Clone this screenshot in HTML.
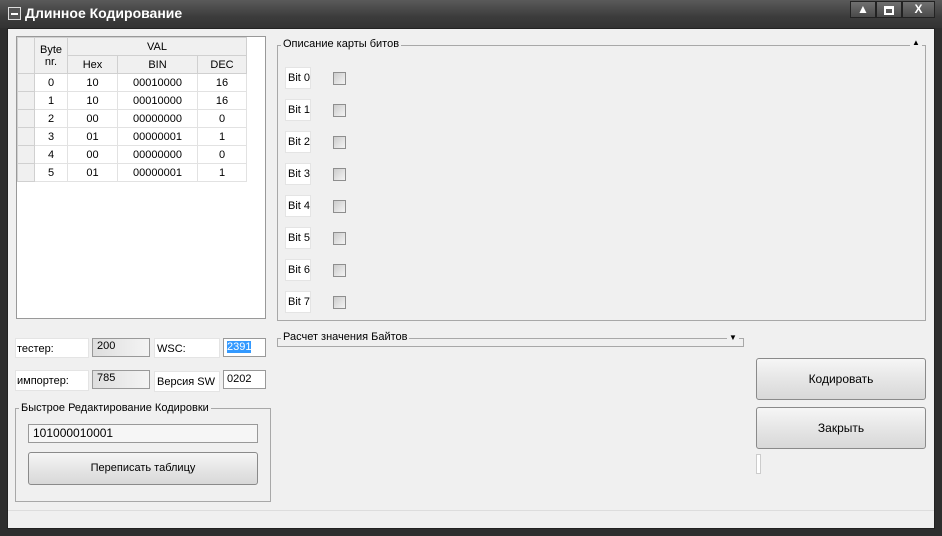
<!DOCTYPE html><html><head><meta charset="utf-8"><style>
*{box-sizing:border-box;margin:0;padding:0}
body{width:942px;height:536px;background:#2e2e2e;font-family:"Liberation Sans",sans-serif;font-size:11px;color:#000;position:relative;overflow:hidden}
.a{position:absolute;white-space:nowrap}
.title{left:0;top:0;width:942px;height:28px;background:linear-gradient(#5a5a5a,#3c3c3c 60%,#333);}
.client{left:7px;top:28px;width:928px;height:501px;background:#f0f0f0;border:1px solid #222}
table{border-collapse:collapse;position:absolute;left:17px;top:37px;background:#fff;font-size:11px}
td{border:1px solid #e2e2e2;text-align:center;height:18px;padding:0}
td.h{background:#f0f0f0;border-color:#d0d0d0}
.lbl{background:#fff;border:1px solid #e4e4e4;padding:3px 2px;}
.bl{background:#fff;border:1px solid #e4e4e4;width:26px;height:22px;line-height:20px;padding-left:2px}
.fld{background:linear-gradient(90deg,#dedede,#f4f4f4);border:1px solid #999;padding:1px 4px}
.cb{width:13px;height:13px;border:1px solid #8e8e8e;background:linear-gradient(135deg,#ccc,#f4f4f4)}
.btn{border:1px solid #8a8a8a;border-radius:3px;background:linear-gradient(#f6f6f6,#e6e6e6 50%,#d8d8d8);text-align:center;font-size:12px}
.grp{border:1px solid #a8a8a8}
.leg{background:#f0f0f0;padding:0 2px;font-size:11px}
.wb{top:1px;height:17px;border:1px solid #222;background:linear-gradient(#707070,#4a4a4a);color:#fff;text-align:center;font-weight:bold;font-size:12px;line-height:15px}
</style></head><body>
<div class="a title"></div>
<div class="a" style="left:8px;top:7px;width:13px;height:13px;border:1px solid #ddd;background:#555"><div style="margin:5px 2px;height:2px;background:#fff"></div></div>
<div class="a" style="left:25px;top:5px;color:#fff;font-weight:bold;font-size:14px">Длинное Кодирование</div>
<div class="a wb" style="left:850px;width:26px">▲</div>
<div class="a wb" style="left:876px;width:26px"><div style="margin:4px 7px;height:9px;border:2px solid #fff;border-top-width:3px"></div></div>
<div class="a wb" style="left:902px;width:33px">X</div>
<div class="a client"></div>
<div class="a" style="left:16px;top:36px;width:250px;height:283px;background:#fff;border:1px solid #999"></div>
<table>
<tr><td class="h" rowspan="2" style="width:17px"></td><td class="h" rowspan="2" style="width:33px">Byte<br>nr.</td><td class="h" colspan="3">VAL</td></tr>
<tr><td class="h" style="width:50px">Hex</td><td class="h" style="width:80px">BIN</td><td class="h" style="width:49px">DEC</td></tr>
<tr><td class="h"></td><td>0</td><td>10</td><td>00010000</td><td>16</td></tr>
<tr><td class="h"></td><td>1</td><td>10</td><td>00010000</td><td>16</td></tr>
<tr><td class="h"></td><td>2</td><td>00</td><td>00000000</td><td>0</td></tr>
<tr><td class="h"></td><td>3</td><td>01</td><td>00000001</td><td>1</td></tr>
<tr><td class="h"></td><td>4</td><td>00</td><td>00000000</td><td>0</td></tr>
<tr><td class="h"></td><td>5</td><td>01</td><td>00000001</td><td>1</td></tr>
</table>
<div class="a grp" style="left:277px;top:45px;width:649px;height:276px"></div>
<div class="a leg" style="left:281px;top:38px">Описание карты битов</div>
<div class="a" style="left:910px;top:38px;font-size:8px;background:#f0f0f0;padding:0 2px">▲</div>
<div class="a" style="left:285px;top:67px">
<div class="a bl" style="top:0">Bit 0</div><div class="a cb" style="left:48px;top:5px"></div>
<div class="a bl" style="top:32px">Bit 1</div><div class="a cb" style="left:48px;top:37px"></div>
<div class="a bl" style="top:64px">Bit 2</div><div class="a cb" style="left:48px;top:69px"></div>
<div class="a bl" style="top:96px">Bit 3</div><div class="a cb" style="left:48px;top:101px"></div>
<div class="a bl" style="top:128px">Bit 4</div><div class="a cb" style="left:48px;top:133px"></div>
<div class="a bl" style="top:160px">Bit 5</div><div class="a cb" style="left:48px;top:165px"></div>
<div class="a bl" style="top:192px">Bit 6</div><div class="a cb" style="left:48px;top:197px"></div>
<div class="a bl" style="top:224px">Bit 7</div><div class="a cb" style="left:48px;top:229px"></div>
</div>
<div class="a grp" style="left:277px;top:338px;width:467px;height:9px"></div>
<div class="a leg" style="left:281px;top:331px">Расчет значения Байтов</div>
<div class="a" style="left:727px;top:333px;font-size:8px;background:#f0f0f0;padding:0 2px">▼</div>
<div class="a lbl" style="left:15px;top:338px;width:74px;height:20px;padding:4px 1px">тестер:</div>
<div class="a fld" style="left:92px;top:338px;width:58px;height:19px">200</div>
<div class="a lbl" style="left:154px;top:338px;width:66px;height:20px;padding:4px 2px">WSC:</div>
<div class="a fld" style="left:223px;top:338px;width:43px;height:19px;background:#fff;padding:2px 3px"><span style="background:#3399ff;color:#fff">2391</span></div>
<div class="a lbl" style="left:15px;top:370px;width:74px;height:21px;padding:4px 1px">импортер:</div>
<div class="a fld" style="left:92px;top:370px;width:58px;height:19px">785</div>
<div class="a lbl" style="left:154px;top:371px;width:66px;height:21px;padding:4px 2px">Версия SW</div>
<div class="a fld" style="left:223px;top:370px;width:43px;height:19px;background:#fff;padding:2px 3px">0202</div>
<div class="a grp" style="left:15px;top:408px;width:256px;height:94px"></div>
<div class="a leg" style="left:19px;top:402px">Быстрое Редактирование Кодировки</div>
<div class="a fld" style="left:28px;top:424px;width:230px;height:19px;background:#f6f6f6;font-size:12px">101000010001</div>
<div class="a btn" style="left:28px;top:452px;width:230px;height:33px;line-height:31px;font-size:11px">Переписать таблицу</div>
<div class="a btn" style="left:756px;top:358px;width:170px;height:42px;line-height:40px">Кодировать</div>
<div class="a btn" style="left:756px;top:407px;width:170px;height:42px;line-height:40px">Закрыть</div>
<div class="a" style="left:756px;top:454px;width:5px;height:20px;border:1px solid #ccc;background:#fff"></div>
<div class="a" style="left:8px;top:510px;width:926px;height:18px;background:#f0f0f0;border-top:1px solid #ddd"></div>
</body></html>
